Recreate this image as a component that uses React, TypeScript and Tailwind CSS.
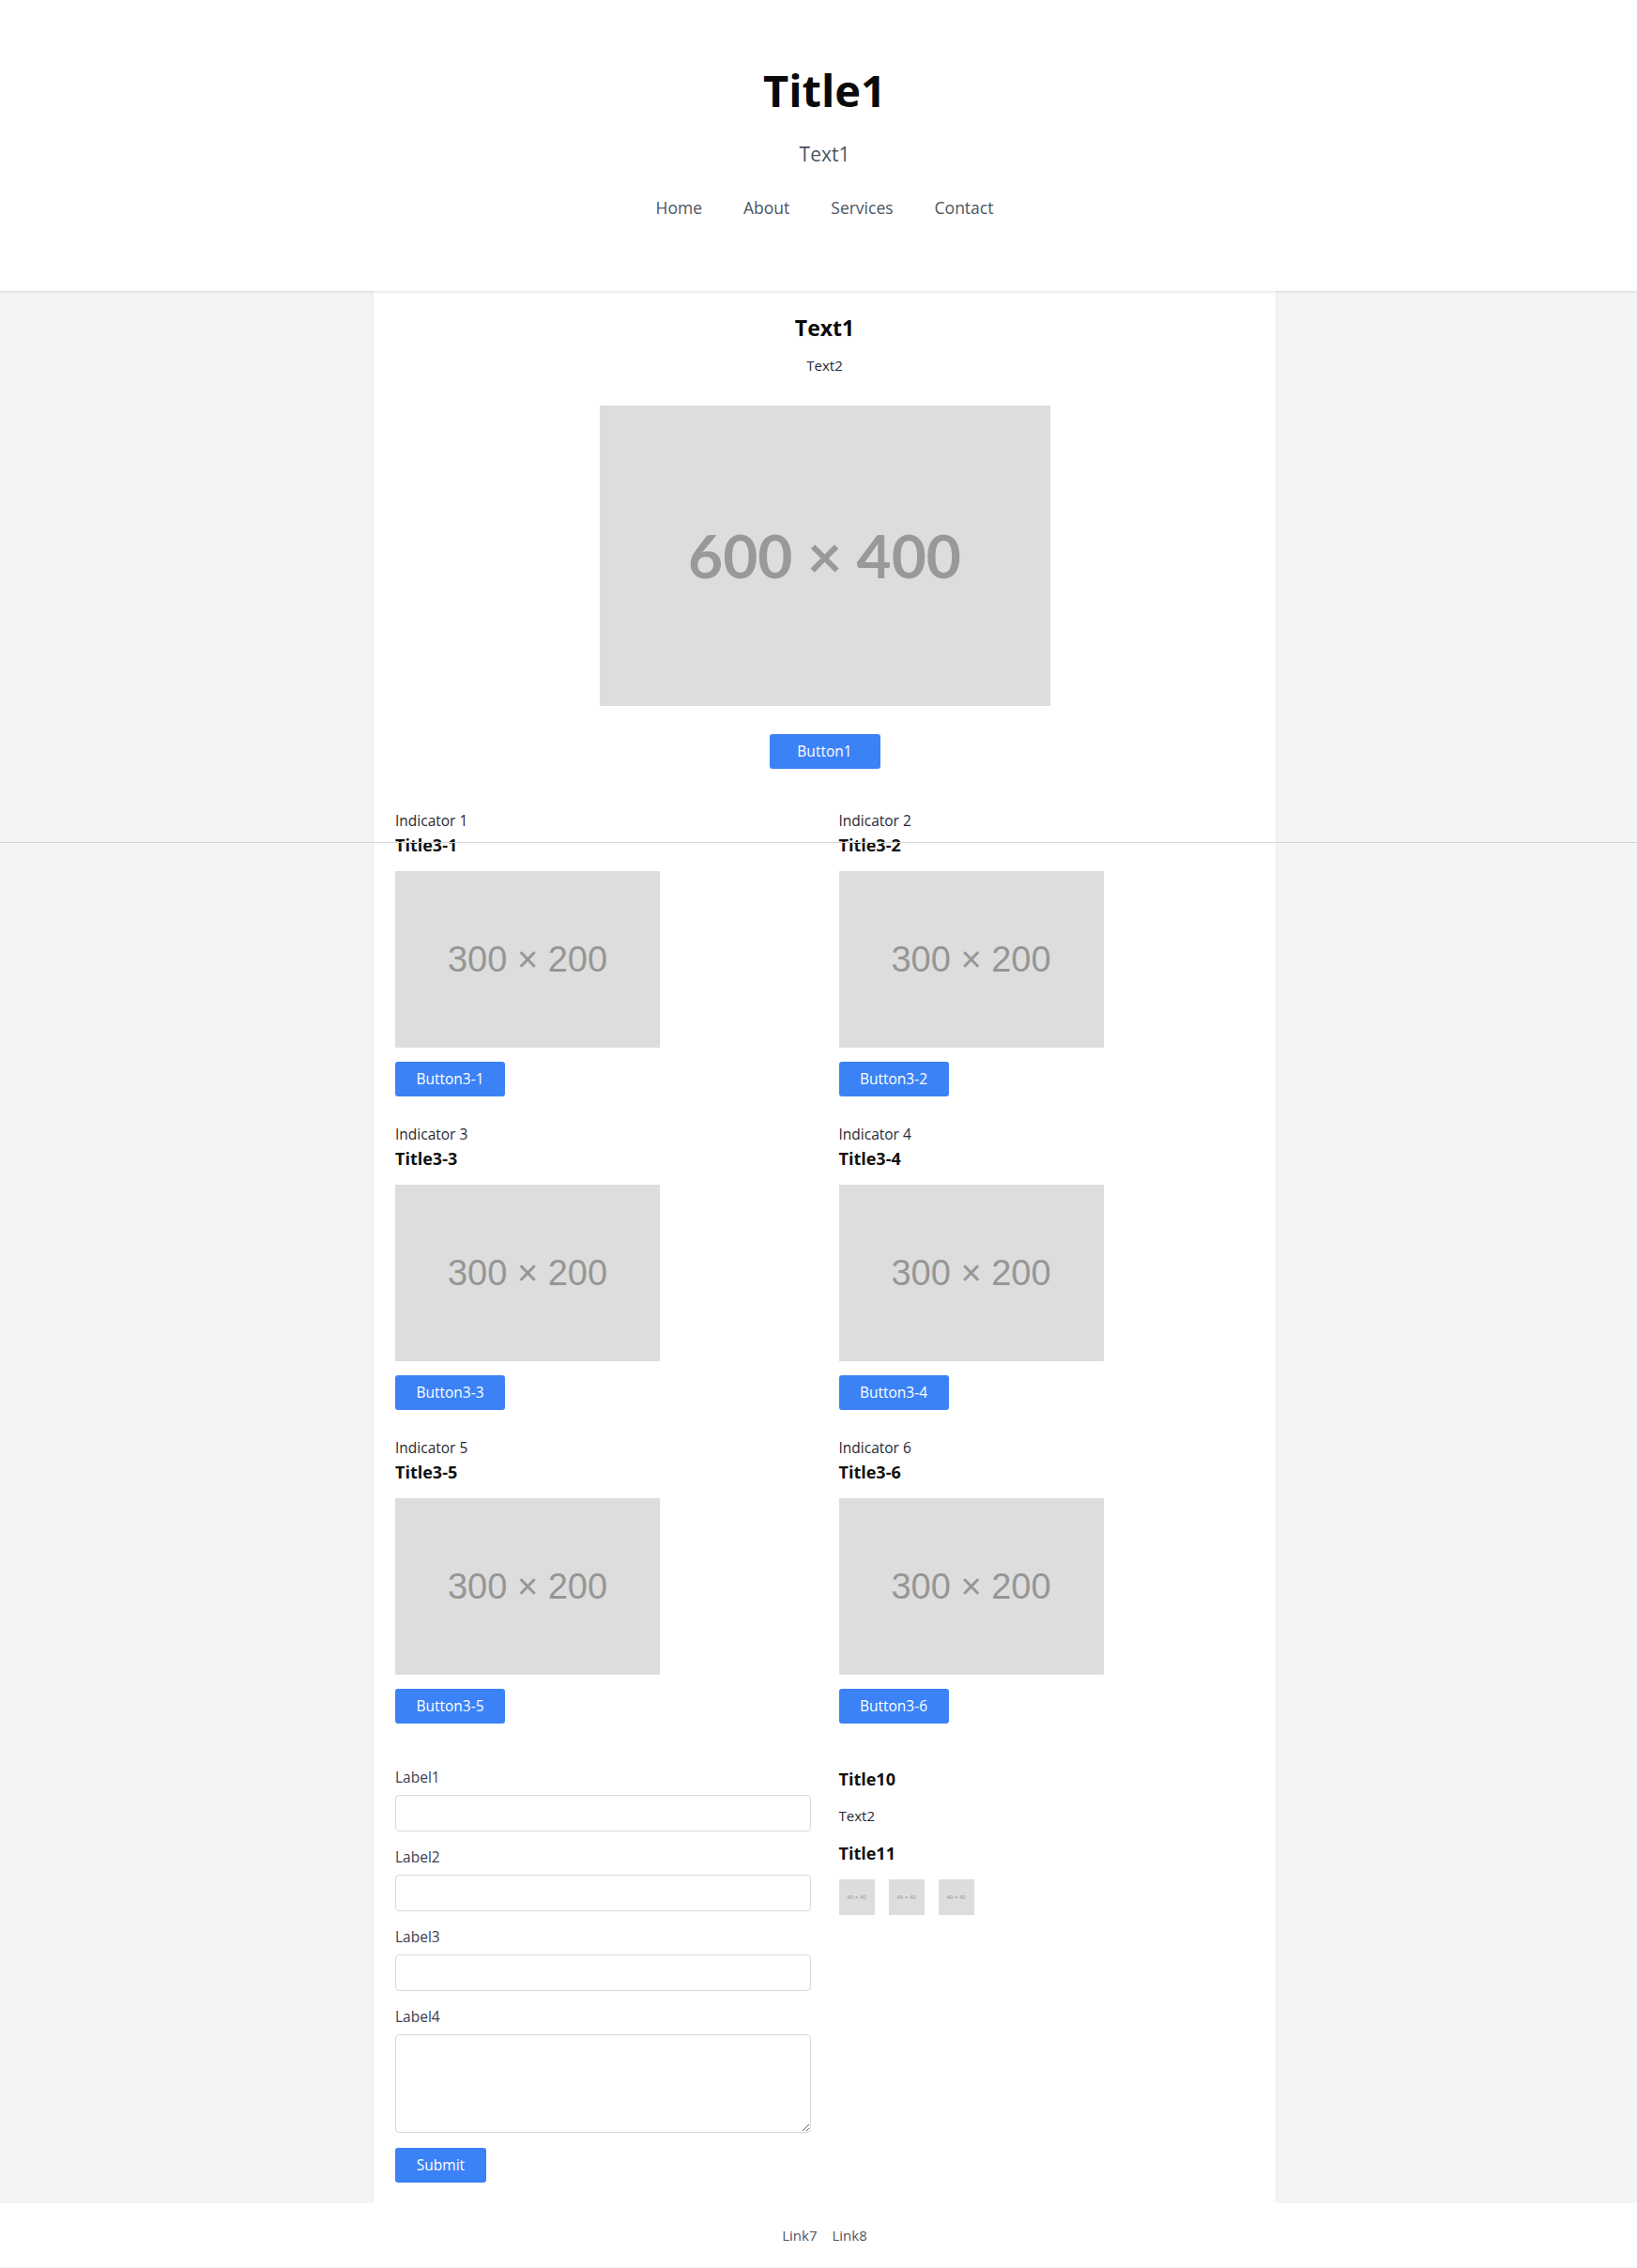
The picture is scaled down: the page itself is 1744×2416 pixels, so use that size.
import React from "react";

const font = { fontFamily: '"Open Sans", "Noto Sans", Arial, sans-serif' };

function BigPlaceholder() {
  return (
    <div className="mx-auto mt-[31px] flex h-[320px] w-[480px] items-center justify-center bg-[#dddddd]">
      <span className="text-[64px] font-bold leading-none text-[#999999] [font-family:Lato,'Liberation_Sans',sans-serif]">
        600 × 400
      </span>
    </div>
  );
}

function CardPlaceholder() {
  return (
    <div className="mt-[14px] flex h-[188px] w-[282px] items-center justify-center bg-[#dddddd]">
      <span className="text-[38px] leading-none text-[#969696] [font-family:'Liberation_Sans',Arial,sans-serif]">
        300 × 200
      </span>
    </div>
  );
}

function Thumb() {
  return (
    <div className="flex h-[38px] w-[38px] items-center justify-center bg-[#dddddd]">
      <span className="text-[6px] leading-none text-[#999999] [font-family:'Liberation_Sans',Arial,sans-serif]">
        40 × 40
      </span>
    </div>
  );
}

function Card({ n }: { n: number }) {
  return (
    <div className="flex flex-col items-start">
      <div className="text-[15.5px] leading-[24px] text-[#1f2937]">Indicator {n}</div>
      <div className="text-[18px] font-bold leading-[28px] text-[#111111]">Title3-{n}</div>
      <CardPlaceholder />
      <button className="mt-[15px] flex h-[37px] w-[117px] items-center justify-center rounded-[3px] bg-[#3b82f6] text-[15.5px] text-white">
        Button3-{n}
      </button>
    </div>
  );
}

function Field({ label, area }: { label: string; area?: boolean }) {
  return (
    <div className="flex flex-col">
      <label className="mb-[7px] text-[15.5px] leading-[24px] text-[#374151]">{label}</label>
      {area ? (
        <textarea className="h-[105px] w-full rounded-[4px] border border-[#d9d9d9] bg-white" />
      ) : (
        <input className="h-[39px] w-full rounded-[4px] border border-[#d9d9d9] bg-white" />
      )}
    </div>
  );
}

export default function App() {
  return (
    <div className="relative min-h-[2416px] bg-[#f3f4f6]" style={font}>
      <header className="relative z-10 bg-white pl-[13px] shadow-[0_1px_3px_rgba(0,0,0,0.12)]">
        <div className="flex flex-col items-center pb-[75px] pt-[72px]">
          <h1 className="text-[47px] font-bold leading-[48px] text-[#0a0a0a]">Title1</h1>
          <p className="mt-[30px] text-[21px] leading-[28px] text-[#4b5563]">Text1</p>
          <nav className="mt-[29px] flex gap-[44px] text-[17.5px] leading-[28px] text-[#4b5563]">
            <a>Home</a>
            <a>About</a>
            <a>Services</a>
            <a>Contact</a>
          </nav>
        </div>
      </header>

      <div className="pl-[13px]">
        <main className="mx-auto w-[961px] bg-white px-[23px] pb-[22px] pt-[23px] shadow-[0_0_3px_rgba(0,0,0,0.06)]">
          <div className="flex flex-col items-center">
            <h2 className="text-[23px] font-bold leading-[32px] text-[#0a0a0a]">Text1</h2>
            <p className="mt-[12px] text-[15px] leading-[24px] text-[#1f2937]">Text2</p>
          </div>
          <BigPlaceholder />
          <div className="mt-[30px] flex justify-center">
            <button className="flex h-[37px] w-[118px] items-center justify-center rounded-[3px] bg-[#3b82f6] text-[15.5px] text-white">
              Button1
            </button>
          </div>

          <div className="mt-[43px] grid grid-cols-2 gap-x-[30px] gap-y-[28px]">
            {[1, 2, 3, 4, 5, 6].map((n) => (
              <Card key={n} n={n} />
            ))}
          </div>

          <div className="mt-[45px] grid grid-cols-2 gap-x-[30px]">
            <form className="flex flex-col gap-[15px]" onSubmit={(e) => e.preventDefault()}>
              <Field label="Label1" />
              <Field label="Label2" />
              <Field label="Label3" />
              <Field label="Label4" area />
              <div className="pt-px">
                <button className="flex h-[37px] w-[97px] items-center justify-center rounded-[3px] bg-[#3b82f6] text-[15.5px] text-white">
                  Submit
                </button>
              </div>
            </form>
            <div className="flex flex-col items-start">
              <h3 className="text-[18px] font-bold leading-[28px] text-[#111111]">Title10</h3>
              <p className="mt-[13px] text-[15px] leading-[24px] text-[#1f2937]">Text2</p>
              <h3 className="mt-[14px] text-[18px] font-bold leading-[28px] text-[#111111]">Title11</h3>
              <div className="mt-[14px] flex gap-[15px]">
                <Thumb />
                <Thumb />
                <Thumb />
              </div>
            </div>
          </div>
        </main>
      </div>

      <footer className="bg-white py-[22px] pl-[13px]">
        <div className="flex justify-center gap-[16px] text-[15px] leading-[24px] text-[#4b5563]">
          <a>Link7</a>
          <a>Link8</a>
        </div>
      </footer>

      <div className="pointer-events-none absolute left-0 right-0 top-[897px] z-20 h-px bg-[#d6d6d6]" />
    </div>
  );
}
